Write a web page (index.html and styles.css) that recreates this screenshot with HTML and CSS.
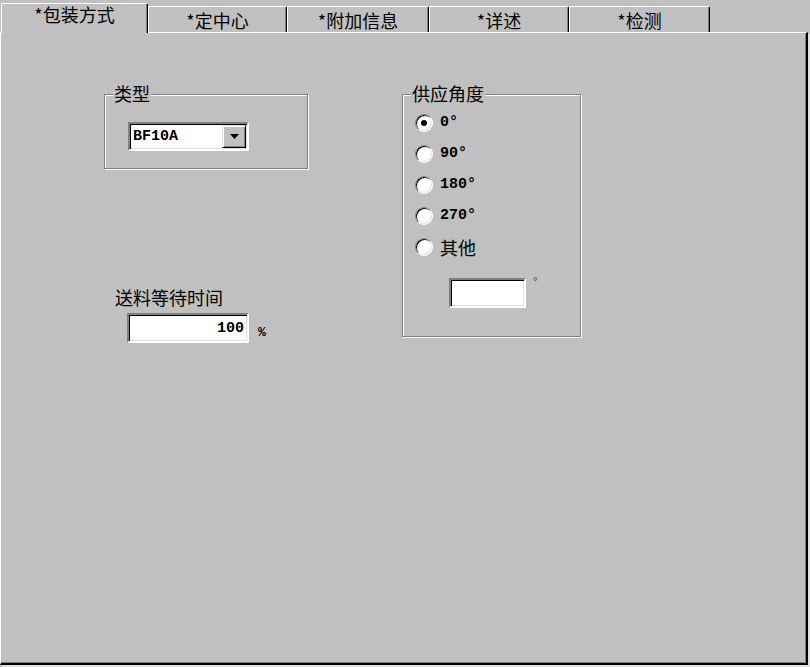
FILE: index.html
```html
<!DOCTYPE html>
<html lang="zh-CN">
<head>
  <meta charset="UTF-8">
  <title>包装方式</title>
  <link rel="stylesheet" href="styles.css">
</head>
<body>
  <div class="tabs">
    <div class="tab active tab-1">*包装方式</div>
    <div class="tab tab-2">*定中心</div>
    <div class="tab tab-3">*附加信息</div>
    <div class="tab tab-4">*详述</div>
    <div class="tab tab-5">*检测</div>
  </div>

  <div class="panel">
    <div class="left-col">
      <div class="group group-type">
        <span class="legend">类型</span>
        <div class="combo">
          <span class="combo-text">BF10A</span>
          <span class="combo-btn">
            <svg width="9" height="5" viewBox="0 0 9 5"><polygon points="0,0 9,0 4.5,5" fill="#000"/></svg>
          </span>
        </div>
      </div>

      <div class="wait">
        <div class="wait-label">送料等待时间</div>
        <div class="wait-row">
          <input class="field wait-input" type="text" value="100">
          <span class="unit">%</span>
        </div>
      </div>
    </div>

    <div class="group group-angle">
      <span class="legend">供应角度</span>
      <label class="radio-row"><span class="radio checked"></span><span class="num">0°</span></label>
      <label class="radio-row"><span class="radio"></span><span class="num">90°</span></label>
      <label class="radio-row"><span class="radio"></span><span class="num">180°</span></label>
      <label class="radio-row"><span class="radio"></span><span class="num">270°</span></label>
      <label class="radio-row"><span class="radio"></span><span>其他</span></label>
      <div class="other-row">
        <input class="field other-input" type="text" value="">
        <span class="deg">°</span>
      </div>
    </div>
  </div>
</body>
</html>
```

FILE: styles.css
```css
* {
  box-sizing: border-box;
}
html, body {
  margin: 0;
}
body {
  width: 810px;
  height: 667px;
  overflow: hidden;
  background: #c0c0c0;
  color: #000;
  font-family: "Noto Sans CJK SC", sans-serif;
  font-size: 18px;
  line-height: 20px;
}

/* tab strip */
.tabs {
  display: flex;
  align-items: flex-end;
  height: 32px;
  padding-left: 1px;
}
.tab {
  height: 26px;
  padding-top: 3px;
  text-align: center;
  border-top: 1px solid #fff;
  border-left: 1px solid #fff;
  border-right: 1px solid #000;
  border-radius: 2px 2px 0 0;
  box-shadow: inset -1px 0 #808080;
}
.tab.active {
  position: relative;
  z-index: 1;
  height: 30px;
  padding-top: 0;
  margin-bottom: -1px;
  background: #c0c0c0;
}
.tab-1 { width: 147px; }
.tab-2 { width: 139px; }
.tab-3 { width: 142px; }
.tab-4 { width: 140px; }
.tab-5 { width: 141px; }

/* page body */
.panel {
  display: flex;
  align-items: flex-start;
  gap: 94px;
  width: 808px;
  height: 633px;
  padding: 61px 0 0 103px;
  border-top: 1px solid #fff;
  border-left: 1px solid #fff;
  border-right: 2px solid #000;
  border-bottom: 2px solid #000;
  box-shadow: inset -1px -1px #808080, 2px 2px #e0e0e0;
}

/* etched group box */
.group {
  position: relative;
  border: 1px solid #808080;
  box-shadow: 1px 1px #fff, inset 1px 1px #fff;
}
.legend {
  position: absolute;
  top: -12px;
  left: 8px;
  padding: 0 1px;
  background: #c0c0c0;
}
.group-type {
  width: 204px;
  height: 75px;
  padding: 27px 0 0 23px;
}
.group-angle {
  width: 179px;
  height: 243px;
  padding: 12px 0 0 12px;
}

/* sunken fields */
.combo,
.field {
  background: #fff;
  border: 2px solid;
  border-color: #808080 #fff #fff #808080;
  box-shadow: inset 1px 1px #000, inset -1px -1px #dfdfdf;
}
.combo {
  display: flex;
  width: 121px;
  height: 29px;
  padding: 1px;
}
.combo-text {
  flex: 1;
  padding-left: 2px;
  font-family: "Liberation Mono", monospace;
  font-size: 15px;
  font-weight: bold;
  line-height: 23px;
}
.combo-btn {
  display: flex;
  align-items: center;
  justify-content: center;
  width: 24px;
  height: 23px;
  background: #c0c0c0;
  border: 1px solid;
  border-color: #dfdfdf #000 #000 #dfdfdf;
  box-shadow: inset 1px 1px #fff, inset -1px -1px #808080;
}
.field {
  display: block;
  margin: 0;
  outline: none;
  font-family: "Liberation Mono", monospace;
  font-size: 15px;
  font-weight: bold;
  color: #000;
}

/* wait time */
.wait {
  margin-top: 118px;
}
.wait-label {
  padding-left: 11px;
}
.wait-row {
  display: flex;
  margin: 6px 0 0 23px;
}
.wait-input {
  width: 122px;
  height: 30px;
  padding: 0 3px 0 0;
  text-align: right;
}
.unit {
  align-self: flex-end;
  margin: 0 0 4px 9px;
  font-family: "Liberation Mono", monospace;
  font-size: 13px;
  font-weight: bold;
  line-height: 13px;
}

/* radio list */
.radio-row {
  display: flex;
  align-items: center;
  gap: 7px;
  height: 31px;
}
.radio {
  position: relative;
  width: 18px;
  height: 18px;
  border-radius: 50%;
  background: #fff;
  border: 1px solid;
  border-color: #808080 #fff #fff #808080;
  box-shadow: inset 1px 1px #000, inset -1px -1px #dfdfdf;
}
.radio.checked::after {
  content: "";
  position: absolute;
  top: 5px;
  left: 5px;
  width: 6px;
  height: 6px;
  border-radius: 50%;
  background: #000;
}
.num {
  font-family: "Liberation Mono", monospace;
  font-size: 15px;
  font-weight: bold;
}
.other-row {
  display: flex;
  margin: 16px 0 0 34px;
}
.other-input {
  width: 77px;
  height: 30px;
}
.deg {
  margin-left: 6px;
  font-family: "Liberation Mono", monospace;
  font-size: 11px;
  line-height: 8px;
  color: #404040;
}
```
